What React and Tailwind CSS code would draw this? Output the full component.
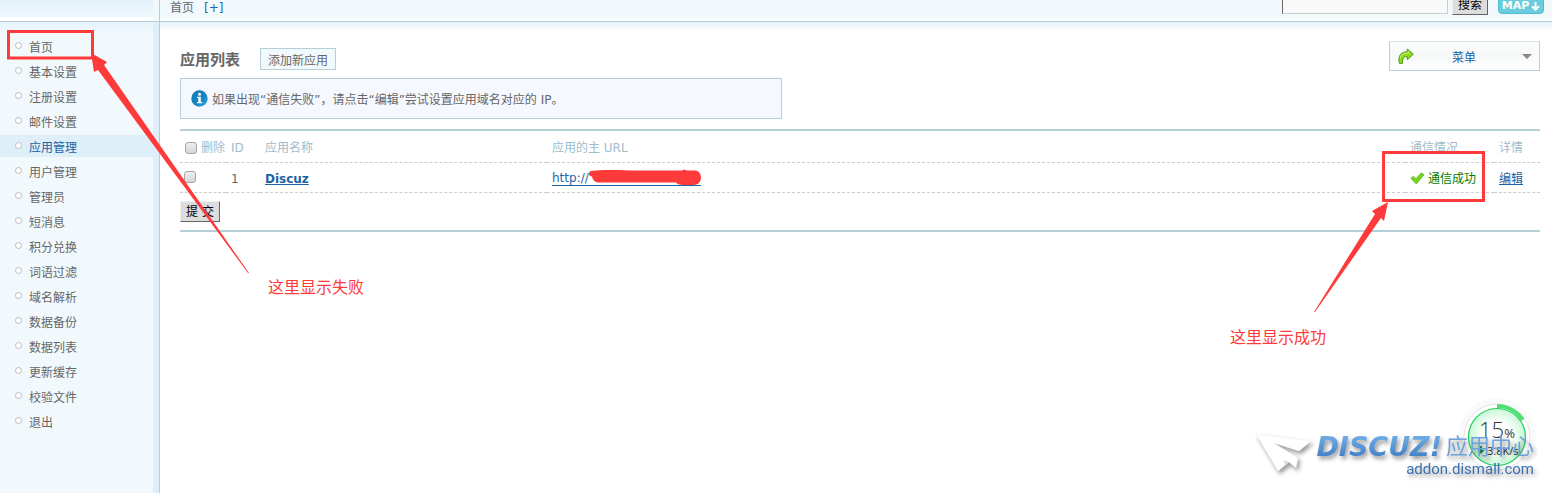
import React, { useState } from 'react';

const NAV_ITEMS = [
  '首页',
  '基本设置',
  '注册设置',
  '邮件设置',
  '应用管理',
  '用户管理',
  '管理员',
  '短消息',
  '积分兑换',
  '词语过滤',
  '域名解析',
  '数据备份',
  '数据列表',
  '更新缓存',
  '校验文件',
  '退出',
];

const checkboxClass =
  'block w-3 h-3 shrink-0 appearance-none rounded-[3px] border border-[#a6a6a6] bg-linear-to-b from-[#f0f0f0] to-[#d6d6d6] checked:bg-blue-400';
const buttonClass =
  'h-[21px] shrink-0 bg-[#dddddd] border border-t-[#eeeeee] border-l-[#eeeeee] border-r-[#666666] border-b-[#666666] text-black leading-[20px] whitespace-nowrap';

function TopBar() {
  return (
    <header className="flex h-[22px] overflow-hidden border-b border-[#b5cfd9]">
      <div className="flex w-40 shrink-0 border-r border-[#b5cfd9] bg-[#f2f9fd]">
        <div className="w-[153px] border-b-4 border-white bg-linear-to-b from-[#e3f1fa] to-[#edf7fd]" />
      </div>
      <div className="flex flex-1 items-end justify-between border-b-2 border-white bg-[#f2f9fd] pl-2.5 pr-2">
        <div className="flex gap-2.5 pb-0.5 leading-[18px] text-[#666666]">
          <span>首页</span>
          <a href="#add" className="text-[#2366a8]">[+]</a>
        </div>
        <form className="flex items-end pb-1" onSubmit={(e) => e.preventDefault()}>
          <input
            type="text"
            aria-label="搜索"
            className="h-[22px] w-[166px] mr-1 mb-px border border-t-[#666666] border-l-[#666666] border-r-[#cccccc] border-b-[#cccccc] bg-[#f9f9f9] px-1 outline-none"
          />
          <button type="submit" className={`${buttonClass} w-9 mr-2.5`}>搜索</button>
          <button
            type="button"
            className="flex h-5 w-[46px] mb-px items-center justify-center gap-0.5 rounded border border-[#4fbcd2] bg-[#6accdc] pt-1 text-[11px] leading-[14px] font-bold text-white"
          >
            MAP
            <svg width="9" height="9" viewBox="0 0 9 9" fill="none" stroke="#fff" strokeWidth="2">
              <path d="M4.5 0v7.500M1 4.200l3.500 3.500 3.500-3.500" />
            </svg>
          </button>
        </form>
      </div>
    </header>
  );
}

function Sidebar({ active, onSelect }) {
  return (
    <aside className="w-40 shrink-0 border-r border-[#b5cfd9] bg-[#deeffa]">
      <nav className="h-full w-[153px] bg-[#f2f9fd] bg-linear-to-b from-[#e6f3fb] to-[#f2f9fd] to-[12px] pt-[13px]">
        <ul className="flex flex-col gap-[3px]">
          {NAV_ITEMS.map((item) => (
            <li key={item}>
              <a
                href="#menu"
                onClick={() => onSelect(item)}
                className={`flex h-[22px] items-center gap-[7px] pl-[15px] ${
                  item === active ? 'bg-[#deeffa] text-[#1a63a5]' : 'text-[#666666]'
                }`}
              >
                <span className="mb-0.5 h-[7px] w-[7px] rounded-full border border-[#b9bcbe] bg-white" />
                <span className="pt-[3px] leading-[22px]">{item}</span>
              </a>
            </li>
          ))}
        </ul>
      </nav>
    </aside>
  );
}

function InfoIcon() {
  return (
    <svg width="17" height="17" viewBox="0 0 17 17" className="shrink-0">
      <defs>
        <linearGradient id="infoFill" x1="0" y1="0" x2="1" y2="1">
          <stop offset="0" stopColor="#1276b0" />
          <stop offset="0.6" stopColor="#1a86c0" />
          <stop offset="1" stopColor="#3bb0e0" />
        </linearGradient>
      </defs>
      <circle cx="8.500" cy="8.500" r="8.200" fill="url(#infoFill)" />
      <circle cx="8.500" cy="4.200" r="1.500" fill="#fff" />
      <path d="M6 6.800h3.800v5.200h1.400v1.300H5.900V12h1.400V8H6z" fill="#fff" />
    </svg>
  );
}

function ShareIcon() {
  return (
    <svg width="16" height="17" viewBox="0 0 16 17">
      <path
        d="M9.300 1l6 5.300-6 5.400V8.600C6 8.500 4.300 10 4.400 15.500L1.300 15.300C-.2 8.500 2.500 3.700 9.300 3.900z"
        fill="#8fdc1c"
        stroke="#4a9a10"
      />
      <path d="M2.200 10C2.600 6.800 5 5.200 10.300 5.200V3.300" fill="none" stroke="#d2f57e" />
    </svg>
  );
}

function CheckIcon() {
  return (
    <svg width="15" height="13" viewBox="0 0 15 13">
      <path
        d="M.8 6.200l2.700-2 2.500 2.500L11.300.8l2.700 2L6.300 12z"
        fill="#78d419"
        stroke="#5db338"
        strokeWidth="0.800"
        strokeLinejoin="round"
      />
    </svg>
  );
}

function MenuButton() {
  return (
    <button
      type="button"
      className="flex h-[30px] w-[151px] shrink-0 items-center justify-between border border-[#b5cfd9] border-t-[#dbe7ee] bg-linear-to-b from-[#fcfdfd] via-[#f7f8f9] to-white pl-2 pr-[7px] text-[#1a63a5]"
    >
      <ShareIcon />
      <span className="pt-[3px] pr-2">菜单</span>
      <svg width="10" height="5" viewBox="0 0 10 5">
        <path d="M0 0h10L5 5z" fill="#888" />
      </svg>
    </button>
  );
}

function AppTable() {
  const [all, setAll] = useState(false);
  const [picked, setPicked] = useState(false);

  return (
    <form className="mt-2.5 border-y-2 border-[#b5cfd9]" onSubmit={(e) => e.preventDefault()}>
      <table className="w-full table-fixed text-left text-[#666666]">
        <colgroup>
          <col className="w-[46px]" />
          <col className="w-[34px]" />
          <col className="w-[287px]" />
          <col />
          <col className="w-[89px]" />
          <col className="w-[46px]" />
        </colgroup>
        <thead>
          <tr className="h-[31px] border-b border-dashed border-[#cccccc] text-[#9dbccb]">
            <th className="pl-[5px] font-normal">
              <label className="flex items-center gap-1 whitespace-nowrap pt-[3px]">
                <input type="checkbox" checked={all} onChange={() => setAll(!all)} className={checkboxClass} />
                删除
              </label>
            </th>
            <th className="px-[5px] pt-[3px] font-normal">ID</th>
            <th className="px-[5px] pt-[3px] font-normal">应用名称</th>
            <th className="px-[5px] pt-[3px] font-normal">应用的主 URL</th>
            <th className="px-[5px] pt-[3px] font-normal">通信情况</th>
            <th className="px-[5px] pt-[3px] font-normal">详情</th>
          </tr>
        </thead>
        <tbody>
          <tr className="h-[30px] border-b border-dashed border-[#cccccc]">
            <td className="pl-1">
              <input
                type="checkbox"
                aria-label="删除 Discuz"
                checked={all || picked}
                onChange={() => setPicked(!picked)}
                className={checkboxClass}
              />
            </td>
            <td className="px-[5px] pt-[3px]">1</td>
            <td className="px-[5px] pt-[3px]">
              <a href="#discuz" className="font-bold text-[#1a63a5] underline">Discuz</a>
            </td>
            <td className="px-[5px] pt-[3px]">
              <a href="#url" className="relative block w-[149px] border-b border-[#1a63a5] leading-[14px] text-[#2366a8]">
                http://
                <svg className="absolute -top-0.5 right-0" width="113" height="17" viewBox="0 0 113 17">
                  <path
                    d="M3 2C20 0 38 2 60 1.500L94 1.500 96 .5l3 1h8c5 .5 6 4 6 8-1 5-4 6.500-9 6.500h-9c-4 0-6-1-7-2.500H12c-5 0-7-2-8-6C0 7 0 3 3 2z"
                    fill="#fe3a3a"
                  />
                </svg>
              </a>
            </td>
            <td className="px-[5px] pt-[3px]">
              <span className="flex items-center gap-[3px] whitespace-nowrap text-[#008000]">
                <CheckIcon />
                通信成功
              </span>
            </td>
            <td className="px-[5px] pt-[3px]">
              <a href="#edit" className="text-[#1a63a5] underline">编辑</a>
            </td>
          </tr>
        </tbody>
      </table>
      <div className="pt-2 pb-2">
        <button type="submit" className={`${buttonClass} block w-10`}>提 交</button>
      </div>
    </form>
  );
}

// Red boxes and arrows laid over the page
function Notes() {
  return (
    <div className="pointer-events-none absolute inset-0 text-base leading-5 text-[#fe3a3a]">
      <svg className="absolute left-0 top-0" width="380" height="300" viewBox="0 0 380 300" fill="#fe3a3a">
        <rect x="8.500" y="31.500" width="84" height="26.500" fill="none" stroke="#fe3a3a" strokeWidth="3" />
        <path d="M91 53l16 9-3 3 145 208h-1L98 70l-4 2z" />
      </svg>
      <p className="absolute left-[268px] top-[278px]">这里显示失败</p>
      <svg className="absolute right-0 top-0" width="352" height="350" viewBox="1200 0 352 350" fill="#fe3a3a">
        <rect x="1383.500" y="152.500" width="100" height="48" fill="none" stroke="#fe3a3a" strokeWidth="3" />
        <path d="M1388 202l-16 9 3 3-61 98h1l66-94 3 3z" />
      </svg>
      <p className="absolute right-[226px] top-[328px]">这里显示成功</p>
    </div>
  );
}

function SpeedBall() {
  return (
    <div className="absolute right-[15px] top-0 h-20 w-20 text-[#333333]">
      <svg className="absolute inset-0" width="80" height="80" viewBox="0 0 80 80">
        <defs>
          <radialGradient id="ballFill">
            <stop offset="0.500" stopColor="#fff" />
            <stop offset="1" stopColor="#c9f8d6" />
          </radialGradient>
        </defs>
        <circle cx="40" cy="40" r="39" fill="#fafafa" />
        <circle cx="40" cy="40" r="33" fill="#fff" stroke="#e4e4e4" />
        <circle cx="40" cy="40" r="28.500" fill="url(#ballFill)" stroke="#1fce5c" strokeWidth="1.200" />
        <path d="M40 9A31 31 0 0 1 65.800 22.800" fill="none" stroke="#4ee070" strokeWidth="4" />
        <path d="M23 49h2v4h2.500L24 57l-3.500-4H23z" fill="#17a34a" />
      </svg>
      <div className="absolute inset-x-0 top-5 flex items-baseline justify-center font-['Open_Sans',sans-serif] text-[22px] leading-6 font-light">
        15<span className="text-[13px] font-normal">%</span>
      </div>
      <div className="absolute left-[30px] top-[46px] font-['Open_Sans',sans-serif] text-[11px] leading-4">3.8K/s</div>
    </div>
  );
}

function Watermark() {
  return (
    <div className="pointer-events-none absolute bottom-0 right-0 h-24 w-[300px]">
      <SpeedBall />
      <div className="absolute bottom-4 right-[18px] flex items-start drop-shadow-[2px_3px_2px_rgba(0,0,0,0.4)]">
        <svg width="56" height="44" viewBox="0 0 56 44" className="mr-1">
          <path d="M0 1l55 7-12 10L18 10l24 15-2 10-7-6-11 9z" fill="#fff" stroke="#f0f0f0" strokeWidth="0.500" />
          <path d="M33 29l-4 4-1-6z" fill="#dcdcdc" />
        </svg>
        <div className="flex flex-col items-end">
          <div className="flex items-center">
            <span className="bg-linear-to-b from-[#74b2ea] to-[#3d78c0] bg-clip-text pr-1 text-[27px] leading-7 font-bold italic text-transparent">
              DISCUZ!
            </span>
            <span className="text-[22px] leading-7 text-[#6fa2d9]">应用中心</span>
          </div>
          <span className="font-['Roboto',sans-serif] text-[15px] leading-4 text-[#3b70b0]">addon.dismall.com</span>
        </div>
      </div>
    </div>
  );
}

export default function App() {
  const [active, setActive] = useState('应用管理');

  return (
    <div
      lang="zh-CN"
      className="relative flex min-h-screen flex-col overflow-hidden bg-white font-['DejaVu_Sans','Noto_Sans_CJK_SC',sans-serif] text-xs"
    >
      <TopBar />
      <div className="flex flex-1">
        <Sidebar active={active} onSelect={setActive} />
        <main className="min-w-0 flex-1 bg-linear-to-b from-[#e6f3fb] to-white to-[10px] pt-[19px] pl-5 pr-3">
          <div className="flex items-end justify-between">
            <div className="flex items-center gap-5">
              <h1 className="pt-0.5 text-[15px] leading-[22px] font-bold text-[#666666]">应用列表</h1>
              <button
                type="button"
                className="h-[22px] border border-[#b5cfd9] bg-[#f2f9fd] px-[7px] pt-0.5 leading-5 text-[#666666]"
              >
                添加新应用
              </button>
            </div>
            <MenuButton />
          </div>
          <div className="mt-[7px] flex h-[41px] w-[602px] max-w-full items-center gap-1 border border-[#b5cfd9] bg-[#f5f8fe] pl-2.5 text-[#666666]">
            <InfoIcon />
            <p className="pt-0.5">如果出现“通信失败”，请点击“编辑”尝试设置应用域名对应的 IP。</p>
          </div>
          <AppTable />
        </main>
      </div>
      <Notes />
      <Watermark />
    </div>
  );
}
